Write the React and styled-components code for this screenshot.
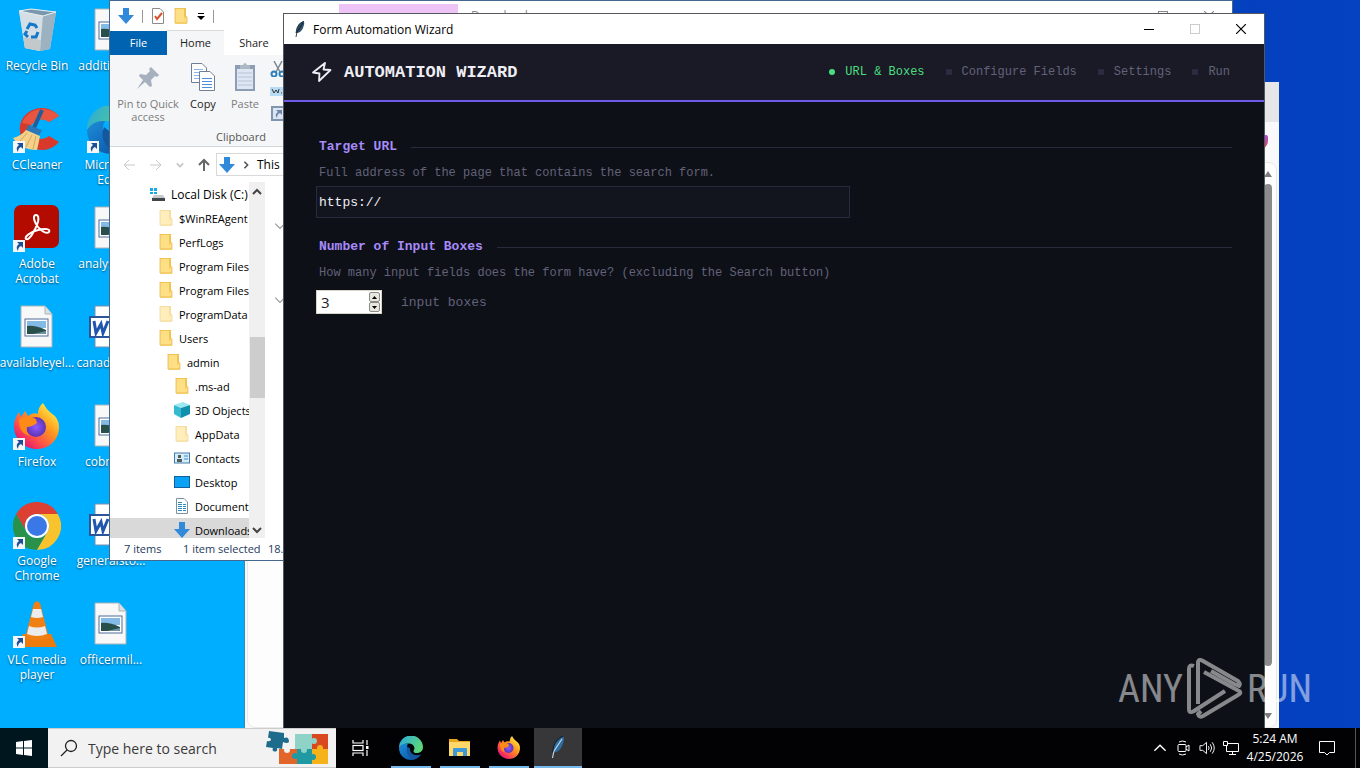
import React, { useState } from "react";
import styled, { createGlobalStyle } from "styled-components";

const UI = `"Open Sans", "Noto Sans", sans-serif`;
const MONO = `"Liberation Mono", "Courier New", monospace`;

/* ---------- app icons ---------- */

const RecycleBinIcon = () => (
  <svg viewBox="0 0 48 48">
    <path d="M6 4 L18 2 L43 5 L37 42 L27 44 L12 41 Z" fill="#b9cdd9" />
    <path d="M6 4 L30 9 L27 44 L12 41 Z" fill="#d3dee5" />
    <path d="M30 9 L43 5 L37 42 L27 44 Z" fill="#9db2c1" />
    <path d="M6 4 L18 2 L43 5 L30 9 Z" fill="#7a98ad" stroke="#e8f0f4" />
    <path d="M10 30 L28 33 L27 44 L12 41 Z" fill="#c3c8cb" />
    <g fill="none" stroke="#1577c9" strokeWidth="3">
      <path d="M14 22 l3 -5 5 1 2 3" />
      <path d="M25 25 l-2 5 -5 0" />
      <path d="M15 30 l-3 -3 2 -3" />
    </g>
  </svg>
);

const CCleanerIcon = () => (
  <svg viewBox="0 0 48 48">
    <path
      d="M46 10 A22 21 0 1 0 46 36 L36 30 A11 10 0 1 1 36 16 Z"
      fill="#d8392b"
    />
    <path d="M46 10 A22 21 0 0 0 9 17 L19 19 A11 10 0 0 1 36 16 Z" fill="#e85642" />
    <path d="M29 4 L20 24" stroke="#1c5f9c" strokeWidth="4" />
    <path d="M15 19 L29 24 L26 30 L13 25 Z" fill="#2b78b8" />
    <path d="M13 24 L27 30 Q25 40 24 44 Q8 44 0 32 Q8 30 13 24 Z" fill="#f4d08a" />
    <path d="M14 27 L6 36 M19 29 L13 41 M23 30 L20 43" stroke="#d3a75b" />
  </svg>
);

const AcrobatIcon = () => (
  <svg viewBox="0 0 48 48">
    <rect x="1" y="0" width="45" height="43" rx="7" fill="#b30b00" />
    <path
      d="M23 10 C20 10 20 15 25 22 C29 27 34 29 36 27 C38 24 32 23 25 25 C17 27 11 32 13 34 C16 36 22 26 25 17 C26 12 25 10 23 10 Z"
      fill="none"
      stroke="#fff"
      strokeWidth="2"
    />
  </svg>
);

const FirefoxIcon = () => (
  <svg viewBox="0 0 48 48">
    <defs>
      <linearGradient id="ff-body" x1="0.9" y1="0.1" x2="0.2" y2="0.9">
        <stop offset="0" stopColor="#fff14a" />
        <stop offset="0.4" stopColor="#ff9a1f" />
        <stop offset="0.75" stopColor="#ff4f4b" />
        <stop offset="1" stopColor="#e5186f" />
      </linearGradient>
      <radialGradient id="ff-core">
        <stop offset="0" stopColor="#9059ff" />
        <stop offset="1" stopColor="#5b34b5" />
      </radialGradient>
    </defs>
    <path
      d="M24 46 C11 46 1 36 1 23 C1 17 4 12 6 9 L8 14 L12 8 L15 13 Q20 9 25 11 Q25 4 30 0 Q33 6 38 10 Q46 15 46 24 C46 37 36 46 24 46 Z"
      fill="url(#ff-body)"
    />
    <circle cx="23" cy="24" r="10" fill="url(#ff-core)" />
    <path d="M6 16 Q15 11 23 16 L24 20 Q19 24 14 24 Q13 30 17 33 Q5 30 6 16 Z" fill="#ff8a16" />
  </svg>
);

const ChromeIcon = () => (
  <svg viewBox="0 0 48 48">
    <path d="M3.2 12 A24 24 0 0 1 44.8 12 H24 A12 12 0 0 0 13.6 30 Z" fill="#dd4032" />
    <path d="M3.2 12 A24 24 0 0 0 24 48 L34.4 30 A12 12 0 0 1 13.6 30 Z" fill="#28924a" />
    <path d="M24 48 A24 24 0 0 0 44.8 12 H24 A12 12 0 0 1 34.4 30 Z" fill="#f9c32d" />
    <circle cx="24" cy="24" r="12" fill="#fff" />
    <circle cx="24" cy="24" r="10" fill="#3b78e7" />
  </svg>
);

const VlcIcon = () => (
  <svg viewBox="0 0 48 48">
    <path d="M10 33 H38 L44 46 H4 Z" fill="#ee7a0c" />
    <path d="M21 2 Q24 -1 27 2 L36 37 Q24 42 12 37 Z" fill="#f08013" />
    <path d="M20 8 H28 L30 16 Q24 18 18 16 Z" fill="#ececec" />
    <path d="M16 25 Q24 28 32 25 L34 33 Q24 37 14 33 Z" fill="#ececec" />
  </svg>
);

const EdgeIcon = () => (
  <svg viewBox="0 0 48 48">
    <defs>
      <linearGradient id="edge-top" x1="0" y1="0" x2="1" y2="0.4">
        <stop offset="0" stopColor="#2aa7e0" />
        <stop offset="1" stopColor="#5bd67b" />
      </linearGradient>
      <linearGradient id="edge-low" x1="0" y1="0" x2="1" y2="1">
        <stop offset="0" stopColor="#1b8fdb" />
        <stop offset="1" stopColor="#0c4a9c" />
      </linearGradient>
    </defs>
    <path d="M0 24 A24 24 0 0 1 48 22 C48 30 42 34 35 34 Q29 34 29 30 L31 25 Q30 15 19 15 Q6 15 0 24 Z" fill="url(#edge-top)" />
    <path d="M0 24 Q6 14 18 15 Q15 20 16 27 Q19 40 32 40 Q39 40 44 37 Q36 48 24 48 A24 24 0 0 1 0 24 Z" fill="url(#edge-low)" />
    <path d="M17 21 Q13 30 19 39 Q25 47 34 45 Q40 42 44 37 Q36 40 29 37 Q21 32 22 25 Z" fill="#13579f" />
  </svg>
);

const ImageFileIcon = () => (
  <svg viewBox="0 0 48 48">
    <path d="M8 2 H32 L39 10 V43 H8 Z" fill="#f8f8f8" stroke="#a9b4ba" />
    <path d="M32 2 V10 H39" fill="#d9e0e4" stroke="#a9b4ba" />
    <rect x="12" y="15" width="23" height="17" fill="#fff" stroke="#4e6c98" />
    <rect x="14" y="17" width="19" height="7" fill="#83bae6" />
    <path d="M14 22 Q22 21 33 26 V30 H14 Z" fill="#294f4b" />
    <path d="M20 30 L33 27 V30 Z" fill="#7093a3" />
  </svg>
);

const WordFileIcon = () => (
  <svg viewBox="0 0 48 48">
    <path d="M8 2 H32 L39 10 V43 H8 Z" fill="#fff" stroke="#7a8fae" />
    <path d="M26 17 H36 M26 21 H36 M26 25 H36 M26 29 H36" stroke="#2b579a" />
    <rect x="3" y="13" width="21" height="20" fill="#fff" stroke="#2b579a" strokeWidth="2" />
    <path d="M7 17 L9 29 L14 20 L16 29 L21 17" fill="none" stroke="#1f56b0" strokeWidth="3" />
  </svg>
);

const ShortcutArrow = () => (
  <Badge viewBox="0 0 12 12">
    <rect width="12" height="12" fill="#f4f7fa" />
    <path d="M4 2 H10 V8 L8 6 Q5 7 5 11 Q2 7 6 4 Z" fill="#1d4f95" />
  </Badge>
);

/* ---------- small glyphs ---------- */

const DownArrowIcon = () => (
  <svg width="16" height="16" viewBox="0 0 16 16">
    <path d="M5 0 H11 V7 H16 L8 16 L0 7 H5 Z" fill="#3189da" />
  </svg>
);

const FolderIcon = ({ faded }) => (
  <svg width="16" height="16" viewBox="0 0 16 16" opacity={faded ? 0.55 : 1}>
    <path d="M2 0 H13 V16 H2 Z" fill="#f6cf5f" />
    <path d="M2 1 H11 V12 L14 8 V16 H2 Z" fill="#ffdf85" />
    <path d="M2 0 V15 H14 V9 L12 8 V0 Z" fill="none" stroke="#e0b03c" strokeWidth="0.7" />
  </svg>
);

const DriveIcon = () => (
  <svg width="16" height="16" viewBox="0 0 16 16">
    <path d="M0 2 h3 v3 h-3 z M4 2 h3 v3 h-3 z M0 6 h3 v2 h-3 z M4 6 h3 v2 h-3 z" fill="#16a9e3" />
    <path d="M4 9 H13 L15 12 H2 Z" fill="#c6cacd" />
    <path d="M2 12 H15 V15 H2 Z" fill="#40474b" />
  </svg>
);

const CubeIcon = () => (
  <svg width="16" height="16" viewBox="0 0 16 16">
    <path d="M0 3 L9 0 L16 3 L7 6 Z" fill="#9be7f2" />
    <path d="M0 3 L7 6 V16 L0 12 Z" fill="#35b9cf" />
    <path d="M7 6 L16 3 V12 L7 16 Z" fill="#138fae" />
  </svg>
);

const ContactIcon = () => (
  <svg width="16" height="16" viewBox="0 0 16 16">
    <rect x="0.5" y="3" width="15" height="10" fill="#d5ecfa" stroke="#447da9" />
    <path d="M3 12 V9 H8 V12 Z M4 5 H7 V8 H4 Z" fill="#4d5f58" />
    <path d="M10 6 H14 M10 9 H14" stroke="#3589c9" />
  </svg>
);

const DesktopIcon = () => (
  <svg width="16" height="16" viewBox="0 0 16 16">
    <rect x="0.5" y="2.5" width="15" height="11" fill="#0aa2f5" stroke="#125f9e" />
  </svg>
);

const DocumentIcon = () => (
  <svg width="16" height="16" viewBox="0 0 16 16">
    <path d="M2.5 0.5 H10 L13.5 4 V15.5 H2.5 Z" fill="#fff" stroke="#7c929f" />
    <path d="M4 4.5 H8 M4 6.5 H12 M4 8.5 H12 M4 10.5 H12 M4 12.5 H12" stroke="#2889bb" />
    <path d="M8.5 5 V13" stroke="#fff" />
  </svg>
);

const Chevron = ({ dir = "down", color = "#444", size = 10, width = 2 }) => {
  const paths = {
    down: "M1 3 L5 7 L9 3",
    up: "M1 7 L5 3 L9 7",
    right: "M3 1 L7 5 L3 9",
  };
  return (
    <svg width={size} height={size} viewBox="0 0 10 10">
      <path d={paths[dir]} fill="none" stroke={color} strokeWidth={width} />
    </svg>
  );
};

const NavArrow = ({ dir, color }) => {
  const paths = {
    left: "M13 7 H2 M7 2 L2 7 L7 12",
    right: "M1 7 H12 M7 2 L12 7 L7 12",
    up: "M7 13 V2 M2 7 L7 2 L12 7",
  };
  return (
    <svg width="14" height="14" viewBox="0 0 14 14">
      <path d={paths[dir]} fill="none" stroke={color} strokeWidth={dir === "up" ? 2 : 1} />
    </svg>
  );
};

const FeatherIcon = ({ size = 16, light }) => (
  <svg width={size} height={size} viewBox="0 0 16 16">
    <path d="M12 0 Q6 2 5 7 L4 12 Q9 12 11 7 Q13 3 12 0 Z" fill={light ? "#2f6da0" : "#31506b"} />
    <path d="M11 2 L5 11 L4 16" fill="none" stroke={light ? "#c9dbe8" : "#0b141c"} strokeWidth="0.8" />
    <path d="M12 0 Q7 2 5 7 L4 12" fill="none" stroke="#10202c" strokeWidth="0.8" />
  </svg>
);

const WindowGlyph = ({ type, color = "#000" }) => (
  <svg width="10" height="10" viewBox="0 0 10 10" shapeRendering={type === "close" ? "auto" : "crispEdges"}>
    {type === "min" && <path d="M0 5.5 H10" stroke={color} />}
    {type === "max" && <rect x="0.5" y="0.5" width="9" height="9" fill="none" stroke={color} />}
    {type === "close" && <path d="M0 0 L10 10 M10 0 L0 10" stroke={color} strokeWidth="1.2" />}
  </svg>
);

/* ---------- desktop ---------- */

const desktopItems = [
  { name: "Recycle Bin", Icon: RecycleBinIcon },
  { name: "CCleaner", Icon: CCleanerIcon, shortcut: true },
  { name: "Adobe Acrobat", Icon: AcrobatIcon, shortcut: true },
  { name: "availableyel...", Icon: ImageFileIcon },
  { name: "Firefox", Icon: FirefoxIcon, shortcut: true },
  { name: "Google Chrome", Icon: ChromeIcon, shortcut: true },
  { name: "VLC media player", Icon: VlcIcon, shortcut: true },
  { name: "additional...", Icon: ImageFileIcon },
  { name: "Microsoft Edge", Icon: EdgeIcon, shortcut: true },
  { name: "analysisre...", Icon: ImageFileIcon },
  { name: "canadaput...", Icon: WordFileIcon },
  { name: "cobra.jpg", Icon: ImageFileIcon },
  { name: "generalsto...", Icon: WordFileIcon },
  { name: "officermil...", Icon: ImageFileIcon },
];

function DesktopIcons() {
  return (
    <IconGrid>
      {desktopItems.map(({ name, Icon, shortcut }) => (
        <DesktopItem key={name}>
          <DesktopArt>
            <Icon />
            {shortcut && <ShortcutArrow />}
          </DesktopArt>
          <DesktopLabel>{name}</DesktopLabel>
        </DesktopItem>
      ))}
    </IconGrid>
  );
}

/* ---------- browser window at the back ---------- */

function BrowserWindow() {
  return (
    <BrowserFrame>
      <BrowserTabs />
      <BrowserToolbar>
        <BrowserBadge />
      </BrowserToolbar>
      <BrowserPage>
        <BrowserScroll>
          <ScrollTriangle viewBox="0 0 8 6">
            <path d="M4 0 L8 6 H0 Z" fill="#7d7d7d" />
          </ScrollTriangle>
          <BrowserThumb />
          <ScrollTriangle viewBox="0 0 8 6">
            <path d="M0 0 H8 L4 6 Z" fill="#7d7d7d" />
          </ScrollTriangle>
        </BrowserScroll>
      </BrowserPage>
    </BrowserFrame>
  );
}

/* ---------- file explorer ---------- */

const treeRows = [
  { name: "Local Disk (C:)", level: 0, icon: <DriveIcon /> },
  { name: "$WinREAgent", level: 1, icon: <FolderIcon faded /> },
  { name: "PerfLogs", level: 1, icon: <FolderIcon /> },
  { name: "Program Files", level: 1, icon: <FolderIcon /> },
  { name: "Program Files (x86)", level: 1, icon: <FolderIcon /> },
  { name: "ProgramData", level: 1, icon: <FolderIcon faded /> },
  { name: "Users", level: 1, icon: <FolderIcon /> },
  { name: "admin", level: 2, icon: <FolderIcon /> },
  { name: ".ms-ad", level: 3, icon: <FolderIcon /> },
  { name: "3D Objects", level: 3, icon: <CubeIcon /> },
  { name: "AppData", level: 3, icon: <FolderIcon faded /> },
  { name: "Contacts", level: 3, icon: <ContactIcon /> },
  { name: "Desktop", level: 3, icon: <DesktopIcon /> },
  { name: "Documents", level: 3, icon: <DocumentIcon /> },
  { name: "Downloads", level: 3, icon: <DownArrowIcon />, selected: true },
];

function ExplorerWindow() {
  return (
    <ExplorerFrame>
      <ExplorerTitle>
        <QuickAccess>
          <DownArrowIcon />
          <Divider />
          <svg width="14" height="16" viewBox="0 0 14 16">
            <path d="M1.5 0.5 H9 L12.5 4 V15.5 H1.5 Z" fill="#fff" stroke="#8b8b8b" />
            <path d="M4 8 L6 11 L11 5" fill="none" stroke="#d8532b" strokeWidth="2" />
          </svg>
          <FolderIcon />
          <svg width="8" height="8" viewBox="0 0 8 8">
            <path d="M1 1.5 H7" stroke="#000" />
            <path d="M0 4 H8 L4 8 Z" fill="#000" />
          </svg>
          <Divider />
        </QuickAccess>
        <ManageTab />
        <ExplorerCaption>Downloads</ExplorerCaption>
        <CaptionButton type="button" aria-label="Minimize">
          <WindowGlyph type="min" color="#888" />
        </CaptionButton>
        <CaptionButton type="button" aria-label="Maximize">
          <WindowGlyph type="max" color="#888" />
        </CaptionButton>
        <CaptionButton type="button" aria-label="Close">
          <WindowGlyph type="close" color="#888" />
        </CaptionButton>
      </ExplorerTitle>

      <RibbonTabs>
        <RibbonTab type="button" $kind="file">File</RibbonTab>
        <RibbonTab type="button" $kind="active">Home</RibbonTab>
        <RibbonTab type="button">Share</RibbonTab>
      </RibbonTabs>

      <Ribbon>
        <ClipboardTools>
          <RibbonButton type="button" $width={76} disabled>
            <svg width="32" height="32" viewBox="0 0 32 32">
              <path d="M19 6 L27 14 L25 16 L23 15 L19 19 L20 25 L18 26 L13 21 L5 28 L11 19 L7 15 L8 13 L14 14 L18 10 L17 8 Z" fill="#a6b0bf" />
            </svg>
            Pin to Quick access
          </RibbonButton>
          <RibbonButton type="button" $width={34}>
            <svg width="32" height="32" viewBox="0 0 32 32">
              <path d="M4.5 2.5 H15 L19.5 7 V21.5 H4.5 Z" fill="#fff" stroke="#6f8096" />
              <path d="M7 8.5 H16 M7 11.5 H16 M7 14.5 H16 M7 17.5 H16" stroke="#8db6e4" />
              <path d="M12.5 10.5 H23 L27.5 15 V29.5 H12.5 Z" fill="#fff" stroke="#6f8096" />
              <path d="M15 17.5 H25 M15 20.5 H25 M15 23.5 H25 M15 26.5 H25" stroke="#4a8edc" />
            </svg>
            Copy
          </RibbonButton>
          <RibbonButton type="button" $width={50} disabled>
            <svg width="32" height="32" viewBox="0 0 32 32">
              <rect x="6" y="4" width="20" height="26" fill="#8d9db3" />
              <rect x="8" y="8" width="16" height="20" fill="#dde6f2" />
              <path d="M9 12 H23 M9 16 H23 M9 20 H23 M9 24 H23" stroke="#b5c4d8" />
              <path d="M11 4 H14 Q16 0 18 4 H21 V8 H11 Z" fill="#adb8c7" />
            </svg>
            Paste
          </RibbonButton>
          <SmallTools>
            <svg width="16" height="16" viewBox="0 0 16 16">
              <path d="M4 0 L10 11 M12 0 L6 11" stroke="#7b8794" strokeWidth="1.5" />
              <circle cx="4" cy="13" r="2.5" fill="none" stroke="#2c7fb8" strokeWidth="2" />
              <circle cx="12" cy="13" r="2.5" fill="none" stroke="#2c7fb8" strokeWidth="2" />
            </svg>
            <svg width="16" height="16" viewBox="0 0 16 16">
              <rect x="0" y="4" width="16" height="9" fill="#b8dcf5" />
              <path d="M2 6 L4 10 L6 7 L8 10 L9 6 M11 10 h1 M13 10 h1" fill="none" stroke="#333" />
            </svg>
            <svg width="16" height="16" viewBox="0 0 16 16">
              <rect x="2" y="2" width="13" height="13" fill="#dce6f3" stroke="#8194b0" strokeWidth="2" />
              <path d="M6 5 H12 V10 L10 8 Q7 9 7 13 Q4 9 8 7 Z" fill="#6d86aa" />
            </svg>
          </SmallTools>
        </ClipboardTools>
        <GroupName>Clipboard</GroupName>
      </Ribbon>

      <AddressRow>
        <NavArrow dir="left" color="#c8c8c8" />
        <NavArrow dir="right" color="#c8c8c8" />
        <Chevron color="#c4c4c4" size={8} />
        <NavArrow dir="up" color="#666" />
        <AddressBar>
          <DownArrowIcon />
          <Chevron dir="right" color="#555" size={8} />
          <span>This PC</span>
        </AddressBar>
      </AddressRow>

      <ExplorerBody>
        <Tree>
          {treeRows.map((row) => (
            <TreeRow key={row.name} $level={row.level} $selected={row.selected}>
              {row.icon}
              {row.name}
            </TreeRow>
          ))}
        </Tree>
        <TreeScroll>
          <Chevron dir="up" />
          <TreeThumb />
          <Chevron />
        </TreeScroll>
        <FileList>
          <Chevron color="#999" size={12} width={1} />
          <Chevron color="#999" size={12} width={1} />
        </FileList>
      </ExplorerBody>

      <ExplorerStatus>
        <span>7 items</span>
        <span>1 item selected</span>
        <span>18.4 KB</span>
      </ExplorerStatus>
    </ExplorerFrame>
  );
}

/* ---------- wizard ---------- */

const steps = ["URL & Boxes", "Configure Fields", "Settings", "Run"];

function WizardWindow() {
  const [url, setUrl] = useState("https://");
  const [count, setCount] = useState(3);
  const current = 0;

  return (
    <WizardFrame>
      <WizardTitle>
        <FeatherIcon />
        <WizardCaption>Form Automation Wizard</WizardCaption>
        <CaptionButton type="button" aria-label="Minimize">
          <WindowGlyph type="min" />
        </CaptionButton>
        <CaptionButton type="button" aria-label="Maximize" disabled>
          <WindowGlyph type="max" color="#ccc" />
        </CaptionButton>
        <CaptionButton type="button" aria-label="Close">
          <WindowGlyph type="close" />
        </CaptionButton>
      </WizardTitle>

      <WizardHeader>
        <Brand>
          <svg width="20" height="20" viewBox="0 0 20 20">
            <path
              d="M13 1 L1 10.5 L7.5 11.5 L7 19 L18.5 8 L11.5 7.5 Z"
              fill="none"
              stroke="#eeeef4"
              strokeWidth="1.8"
              strokeLinejoin="round"
            />
          </svg>
          AUTOMATION WIZARD
        </Brand>
        <Steps>
          {steps.map((label, i) => (
            <Step key={label} $active={i === current}>
              <StepDot $active={i === current} />
              {label}
            </Step>
          ))}
        </Steps>
      </WizardHeader>

      <WizardBody>
        <Section>
          <SectionTitle>Target URL</SectionTitle>
          <Hint htmlFor="target-url">
            Full address of the page that contains the search form.
          </Hint>
          <UrlInput
            id="target-url"
            type="text"
            value={url}
            spellCheck={false}
            onChange={(e) => setUrl(e.target.value)}
          />
        </Section>

        <Section>
          <SectionTitle>Number of Input Boxes</SectionTitle>
          <Hint htmlFor="box-count">
            How many input fields does the form have? (excluding the Search button)
          </Hint>
          <CountRow>
            <Spinner>
              <SpinnerInput
                id="box-count"
                type="text"
                value={count}
                onChange={(e) => setCount(Number(e.target.value) || 0)}
              />
              <SpinnerButtons>
                <SpinButton type="button" aria-label="More" onClick={() => setCount(count + 1)}>
                  <svg width="5" height="3" viewBox="0 0 5 3">
                    <path d="M0 3 L2.5 0 L5 3 Z" />
                  </svg>
                </SpinButton>
                <SpinButton type="button" aria-label="Less" onClick={() => setCount(Math.max(1, count - 1))}>
                  <svg width="5" height="3" viewBox="0 0 5 3">
                    <path d="M0 0 L2.5 3 L5 0 Z" />
                  </svg>
                </SpinButton>
              </SpinnerButtons>
            </Spinner>
            <Unit>input boxes</Unit>
          </CountRow>
        </Section>
      </WizardBody>
    </WizardFrame>
  );
}

/* ---------- watermark ---------- */

function Watermark() {
  return (
    <WatermarkRow>
      <span>ANY</span>
      <svg width="56" height="62" viewBox="0 0 56 62" fill="none" stroke="currentColor" strokeWidth="4" strokeLinejoin="round">
        <path d="M7 8 Q2 6 2 11 V51 Q2 56 7 53 L38 33" />
        <path d="M11 46 V5 Q11 0 16 3 L51 23 Q54 26 52 28 L47 26 L24 13" />
        <path d="M17 14 L52 33 Q55 35 51 37 L16 58 Q12 60 11 56 L14 53" />
      </svg>
      <span>RUN</span>
    </WatermarkRow>
  );
}

/* ---------- taskbar ---------- */

function Taskbar() {
  return (
    <Bar>
      <StartButton type="button" aria-label="Start">
        <svg width="16" height="16" viewBox="0 0 16 16" fill="#fff">
          <path d="M0 2 L7 1 V7.5 H0 Z M8 1 L16 0 V7.5 H8 Z M0 8.5 H7 V15 L0 14 Z M8 8.5 H16 V16 L8 15 Z" />
        </svg>
      </StartButton>
      <SearchBox>
        <svg width="18" height="18" viewBox="0 0 18 18" fill="none" stroke="#222" strokeWidth="1.3">
          <circle cx="11" cy="7" r="5.5" />
          <path d="M7 11 L1 17" />
        </svg>
        <SearchInput type="text" aria-label="Search" placeholder="Type here to search" />
        <svg width="64" height="36" viewBox="0 0 64 36">
          <path d="M4 1 L19 3 L19 8 Q24 6 24 12 Q22 14 18 12 L17 19 L12 18 Q13 23 8 21 Q7 19 8 18 L1 17 L2 11 Q6 12 6 9 Q4 7 3 8 Z" fill="#1d6c8c" />
          <rect x="30" y="4" width="17" height="15" fill="#8fd3c8" />
          <rect x="47" y="4" width="16" height="15" fill="#d9481f" />
          <rect x="14" y="19" width="18" height="15" fill="#e2662a" />
          <rect x="32" y="19" width="15" height="15" fill="#1f9aa3" />
          <rect x="47" y="19" width="16" height="15" fill="#f5b21b" />
          <circle cx="49" cy="11" r="3" fill="#8fd3c8" />
          <circle cx="39" cy="20" r="3" fill="#8fd3c8" />
          <circle cx="30" cy="26" r="3" fill="#1f9aa3" />
          <circle cx="48" cy="27" r="3" fill="#1f9aa3" />
          <circle cx="55" cy="18" r="3" fill="#f5b21b" />
          <circle cx="22" cy="20" r="3" fill="#f2f2f2" />
        </svg>
      </SearchBox>
      <TaskButton type="button" aria-label="Task View">
        <svg width="18" height="18" viewBox="0 0 18 18" fill="none" stroke="#fff" strokeWidth="1.2">
          <path d="M2 1 V4 H12 V1 M2 17 V14 H12 V17" />
          <rect x="2" y="6.5" width="10" height="5" />
          <path d="M16 1 V6 M16 11 V17" />
          <rect x="15" y="7" width="2.5" height="3" fill="#fff" stroke="none" />
        </svg>
      </TaskButton>
      <TaskButtons>
        <TaskButton type="button" aria-label="Edge" $running>
          <TaskArt><EdgeIcon /></TaskArt>
        </TaskButton>
        <TaskButton type="button" aria-label="File Explorer" $running>
          <TaskArt>
            <svg viewBox="0 0 24 24">
              <path d="M1 3 H9 L11 5 H22 V20 H1 Z" fill="#e9a61d" />
              <rect x="1" y="6" width="21" height="14" fill="#ffd869" />
              <path d="M5 20 V13 Q5 12 6 12 H18 Q19 12 19 13 V20 H15 V16 H9 V20 Z" fill="#3d98d8" />
            </svg>
          </TaskArt>
        </TaskButton>
        <TaskButton type="button" aria-label="Firefox" $running>
          <TaskArt><FirefoxIcon /></TaskArt>
        </TaskButton>
        <TaskButton type="button" aria-label="Form Automation Wizard" $active>
          <FeatherIcon size={22} light />
        </TaskButton>
      </TaskButtons>
      <Tray>
        <Chevron dir="up" color="#fff" size={14} width={1} />
        <svg width="16" height="16" viewBox="0 0 16 16" fill="none" stroke="#fff">
          <path d="M4 2 Q7.5 0 11 2 M4 14 Q7.5 16 11 14 M11 7 L14 5 V11 L11 9" />
          <rect x="3" y="4.5" width="8" height="7" rx="1" />
        </svg>
        <svg width="16" height="16" viewBox="0 0 17 16" fill="none" stroke="#fff">
          <path d="M1 5.5 H4 L8 2 V14 L4 10.5 H1 Z M10 6 Q11.5 8 10 10 M12 4 Q15 8 12 12 M14 2 Q18.5 8 14 14" />
        </svg>
        <svg width="16" height="16" viewBox="0 0 16 16" fill="none" stroke="#fff">
          <path d="M5 3.5 H15.5 V11.5 H3.5 V6 M9.5 11.5 V14.5 M6 14.5 H13" />
          <path d="M0.5 1.5 H4.5 V5.5 H0.5 Z" />
        </svg>
        <Clock>
          <span>5:24 AM</span>
          <span>4/25/2026</span>
        </Clock>
        <svg width="16" height="16" viewBox="0 0 16 16" fill="none" stroke="#fff">
          <path d="M0.5 1.5 H15.5 V12.5 H10.5 L8 15 L5.5 12.5 H0.5 Z" />
        </svg>
      </Tray>
      <PeekLine />
    </Bar>
  );
}

export default function App() {
  return (
    <>
      <GlobalStyle />
      <Screen>
        <Desktop>
          <DesktopIcons />
          <BrowserWindow />
          <ExplorerWindow />
          <WizardWindow />
          <Watermark />
        </Desktop>
        <Taskbar />
      </Screen>
    </>
  );
}

/* ---------- styles ---------- */

const GlobalStyle = createGlobalStyle`
  * {
    box-sizing: border-box;
  }
  body {
    margin: 0;
    overflow: hidden;
    font-family: ${UI};
    font-size: 12px;
  }
  svg {
    display: block;
    flex-shrink: 0;
  }
  button, input {
    font-family: inherit;
    font-size: inherit;
    margin: 0;
    padding: 0;
    border: 0;
    background: none;
    outline: none;
  }
`;

const Screen = styled.div`
  display: flex;
  flex-direction: column;
  height: 100vh;
`;

const Desktop = styled.main`
  position: relative;
  flex: 1;
  min-height: 0;
  overflow: hidden;
  background: linear-gradient(to right, #00aeff 0%, #00aeff 20%, #0440be 92%, #0442c2 100%);
`;

const IconGrid = styled.div`
  display: grid;
  grid-auto-flow: column;
  grid-template-rows: repeat(7, 99px);
  grid-auto-columns: 74px;
`;

const DesktopItem = styled.div`
  display: flex;
  flex-direction: column;
  align-items: center;
  padding-top: 7px;
`;

const DesktopArt = styled.div`
  position: relative;
  width: 48px;
  height: 48px;
`;

const Badge = styled.svg`
  position: absolute;
  left: 0;
  bottom: 1px;
  width: 12px;
  height: 12px;
`;

const DesktopLabel = styled.span`
  margin-top: 3px;
  line-height: 15px;
  color: #fff;
  text-align: center;
  text-shadow: 0 1px 2px rgba(0, 0, 0, 0.6);
`;

const CaptionButton = styled.button`
  width: 46px;
  height: 29px;
  display: flex;
  align-items: center;
  justify-content: center;
`;

/* browser */

const BrowserFrame = styled.section`
  position: absolute;
  left: 244px;
  right: 81px;
  top: 82px;
  bottom: 0;
  display: flex;
  flex-direction: column;
  background: #f9f9fb;
  border-left: 1px solid #3d87a8;
`;

const BrowserTabs = styled.div`
  height: 40px;
  background: #e6e6e9;
`;

const BrowserToolbar = styled.div`
  height: 40px;
  display: flex;
  justify-content: flex-end;
  align-items: center;
  padding-right: 11px;
`;

const BrowserBadge = styled.div`
  width: 16px;
  height: 14px;
  border-radius: 0 2px 8px 0;
  background: linear-gradient(#a250d8, #e0484e);
`;

const BrowserPage = styled.div`
  flex: 1;
  margin: 0 2px;
  display: flex;
  justify-content: flex-end;
  border: 1px solid #e9e9ec;
  border-radius: 8px;
  background: #fdfdfd;
`;

const BrowserScroll = styled.div`
  width: 16px;
  padding: 8px 0;
  display: flex;
  flex-direction: column;
  align-items: center;
  gap: 7px;
`;

const ScrollTriangle = styled.svg`
  width: 8px;
  height: 6px;
`;

const BrowserThumb = styled.div`
  flex: 1;
  width: 8px;
  margin-bottom: 40px;
  border-radius: 4px;
  background: #8b8b8b;
`;

/* explorer */

const ExplorerFrame = styled.section`
  position: absolute;
  left: 109px;
  right: 127px;
  top: 0;
  display: flex;
  flex-direction: column;
  background: #fff;
  border: 1px solid #45688e;
`;

const ExplorerTitle = styled.header`
  display: flex;
  height: 30px;
`;

const QuickAccess = styled.div`
  width: 229px;
  padding-left: 8px;
  display: flex;
  align-items: center;
  gap: 8px;
`;

const Divider = styled.div`
  width: 1px;
  height: 13px;
  background: #999;
`;

const ManageTab = styled.div`
  width: 119px;
  margin-top: 3px;
  background: #eec4f6;
`;

const ExplorerCaption = styled.span`
  flex: 1;
  padding-left: 13px;
  line-height: 30px;
  color: #888;
`;

const RibbonTabs = styled.div`
  display: flex;
  height: 24px;
`;

const RibbonTab = styled.button`
  width: ${(p) => (p.$kind ? "57px" : "60px")};
  padding-bottom: 2px;
  font-size: 11px;
  color: ${(p) => (p.$kind === "file" ? "#fff" : "#222")};
  background: ${(p) =>
    p.$kind === "file" ? "#0063b1" : p.$kind === "active" ? "#f5f6f7" : "#fff"};
  box-shadow: ${(p) => (p.$kind === "active" ? "1px 0 #dadbdc, 0 -1px #dadbdc" : "none")};
`;

const Ribbon = styled.div`
  height: 92px;
  padding-top: 6px;
  background: #f5f6f7;
  border-bottom: 1px solid #d6d7d8;
`;

const ClipboardTools = styled.div`
  display: flex;
  height: 68px;
`;

const RibbonButton = styled.button`
  width: ${(p) => p.$width}px;
  display: flex;
  flex-direction: column;
  align-items: center;
  gap: 4px;
  font-size: 11px;
  line-height: 13px;
  color: ${(p) => (p.disabled ? "#7c7c7c" : "#222")};
`;

const SmallTools = styled.div`
  display: flex;
  flex-direction: column;
  gap: 6px;
`;

const GroupName = styled.div`
  width: 262px;
  text-align: center;
  font-size: 11px;
  line-height: 16px;
  color: #555;
`;

const AddressRow = styled.div`
  display: flex;
  align-items: center;
  gap: 13px;
  height: 35px;
  padding-left: 12px;
`;

const AddressBar = styled.div`
  flex: 1;
  height: 23px;
  display: flex;
  align-items: center;
  gap: 7px;
  padding-left: 2px;
  margin-left: -8px;
  border: 1px solid #d9d9d9;
`;

const ExplorerBody = styled.div`
  display: flex;
  height: 356px;
  overflow: hidden;
`;

const Tree = styled.ul`
  width: 139px;
  margin: 0;
  padding: 0;
  list-style: none;
`;

const TreeRow = styled.li`
  display: flex;
  align-items: center;
  gap: 5px;
  height: 24px;
  padding-left: ${(p) => 40 + p.$level * 8}px;
  overflow: hidden;
  white-space: nowrap;
  font-size: ${(p) => (p.$level ? "11px" : "12px")};
  background: ${(p) => (p.$selected ? "#d9d9d9" : "none")};
`;

const TreeScroll = styled.div`
  width: 16px;
  padding: 5px 0 3px;
  display: flex;
  flex-direction: column;
  align-items: center;
  background: #f0f0f0;
`;

const TreeThumb = styled.div`
  width: 15px;
  height: 61px;
  margin: 140px 0 auto;
  background: #cdcdcd;
`;

const FileList = styled.div`
  flex: 1;
  display: flex;
  flex-direction: column;
  gap: 62px;
  padding: 38px 9px;
`;

const ExplorerStatus = styled.footer`
  display: flex;
  height: 22px;
  padding-left: 14px;
  font-size: 11px;
  line-height: 22px;
  color: #1e395b;
  span:nth-child(1) {
    width: 59px;
  }
  span:nth-child(2) {
    width: 85px;
  }
`;

/* wizard */

const WizardFrame = styled.section`
  position: absolute;
  left: 283px;
  right: 95px;
  top: 13px;
  bottom: 0;
  display: flex;
  flex-direction: column;
  background: #0e1017;
  border: 1px solid #55585c;
  border-bottom: 0;
`;

const WizardTitle = styled.header`
  display: flex;
  align-items: center;
  height: 30px;
  padding-left: 8px;
  background: #fff;
`;

const WizardCaption = styled.span`
  flex: 1;
  padding-left: 5px;
  color: #000;
`;

const WizardHeader = styled.div`
  display: flex;
  align-items: center;
  justify-content: space-between;
  height: 58px;
  padding: 0 34px 0 28px;
  background: #1a1a26;
  border-bottom: 2px solid #6c5ce7;
  font-family: ${MONO};
`;

const Brand = styled.div`
  display: flex;
  align-items: center;
  gap: 12px;
  color: #eeeef4;
  font-size: 17px;
  font-weight: bold;
`;

const Steps = styled.ol`
  display: flex;
  gap: 21px;
  margin: 0;
  padding: 0;
  list-style: none;
`;

const Step = styled.li`
  display: flex;
  align-items: center;
  gap: 10px;
  font-size: 12px;
  line-height: 18px;
  white-space: nowrap;
  color: ${(p) => (p.$active ? "#4ade80" : "#62627a")};
`;

const StepDot = styled.span`
  width: 6px;
  height: 6px;
  border-radius: ${(p) => (p.$active ? "3px" : "1px")};
  background: ${(p) => (p.$active ? "#4ade80" : "#2a2a40")};
`;

const WizardBody = styled.div`
  flex: 1;
  display: flex;
  flex-direction: column;
  gap: 20px;
  padding: 36px 32px;
  font-family: ${MONO};
`;

const Section = styled.div`
  display: flex;
  flex-direction: column;
`;

const SectionTitle = styled.h2`
  display: flex;
  align-items: center;
  gap: 14px;
  margin: 0;
  padding-left: 3px;
  font-size: 13px;
  line-height: 18px;
  color: #a78bfa;
  &::after {
    content: "";
    flex: 1;
    height: 1px;
    background: #2a2a3e;
  }
`;

const Hint = styled.label`
  padding: 8px 0 4px 3px;
  font-size: 12px;
  line-height: 18px;
  color: #62627a;
`;

const UrlInput = styled.input`
  width: 100%;
  max-width: 534px;
  height: 32px;
  padding: 0 2px;
  font-size: 13px;
  color: #eeeef4;
  background: #12141e;
  border: 1px solid #2a2a3e;
`;

const CountRow = styled.div`
  display: flex;
  align-items: center;
  gap: 19px;
  padding-top: 4px;
`;

const Spinner = styled.div`
  display: flex;
  width: 66px;
  height: 24px;
  padding: 1px;
  background: #fff;
  border: 1px solid #d8d4c8;
`;

const SpinnerInput = styled.input`
  flex: 1;
  min-width: 0;
  padding-left: 3px;
  font-family: ${UI};
  font-size: 15px;
  color: #222;
`;

const SpinnerButtons = styled.div`
  display: flex;
  flex-direction: column;
  width: 11px;
`;

const SpinButton = styled.button`
  flex: 1;
  display: flex;
  align-items: center;
  justify-content: center;
  background: #e8e6e0;
  border: 1px solid #8d8b85;
  border-radius: 2px;
`;

const Unit = styled.span`
  font-size: 13px;
  color: #62627a;
`;

/* watermark */

const WatermarkRow = styled.div`
  position: absolute;
  right: 48px;
  bottom: 8px;
  display: flex;
  align-items: center;
  gap: 4px;
  font-family: "Liberation Sans Narrow", "Roboto Condensed", "Liberation Sans", sans-serif;
  font-size: 38px;
  color: #fff;
  opacity: 0.5;
`;

/* taskbar */

const Bar = styled.footer`
  display: flex;
  height: 40px;
  background: #020205;
`;

const StartButton = styled.button`
  width: 48px;
  display: flex;
  align-items: center;
  justify-content: center;
  background: #00161f;
`;

const SearchBox = styled.div`
  width: 288px;
  display: flex;
  align-items: center;
  gap: 10px;
  padding: 0 7px 0 12px;
  background: #f2f2f2;
  border: 1px solid #ccc;
  border-width: 1px 0;
`;

const SearchInput = styled.input`
  flex: 1;
  min-width: 0;
  font-size: 14px;
  &::placeholder {
    color: #3a3a3a;
    opacity: 1;
  }
`;

const TaskButtons = styled.div`
  display: flex;
  gap: 1px;
  margin-left: 3px;
`;

const TaskButton = styled.button`
  width: 48px;
  display: flex;
  align-items: center;
  justify-content: center;
  background: ${(p) => (p.$active ? "#37373a" : "none")};
  border-bottom: ${(p) => (p.$active ? "2px solid #76b9ed" : "0")};
  ${(p) =>
    p.$running &&
    `background: linear-gradient(#76b9ed, #76b9ed) center bottom / 40px 2px no-repeat;`}
`;

const TaskArt = styled.span`
  width: 24px;
  height: 24px;
`;

const Tray = styled.div`
  display: flex;
  align-items: center;
  gap: 8px;
  margin-left: auto;
  padding-right: 20px;
`;

const Clock = styled.time`
  display: flex;
  flex-direction: column;
  align-items: center;
  width: 56px;
  margin-right: 8px;
  line-height: 18px;
  white-space: nowrap;
  color: #fff;
`;

const PeekLine = styled.div`
  width: 5px;
  border-left: 1px solid #555;
`;
